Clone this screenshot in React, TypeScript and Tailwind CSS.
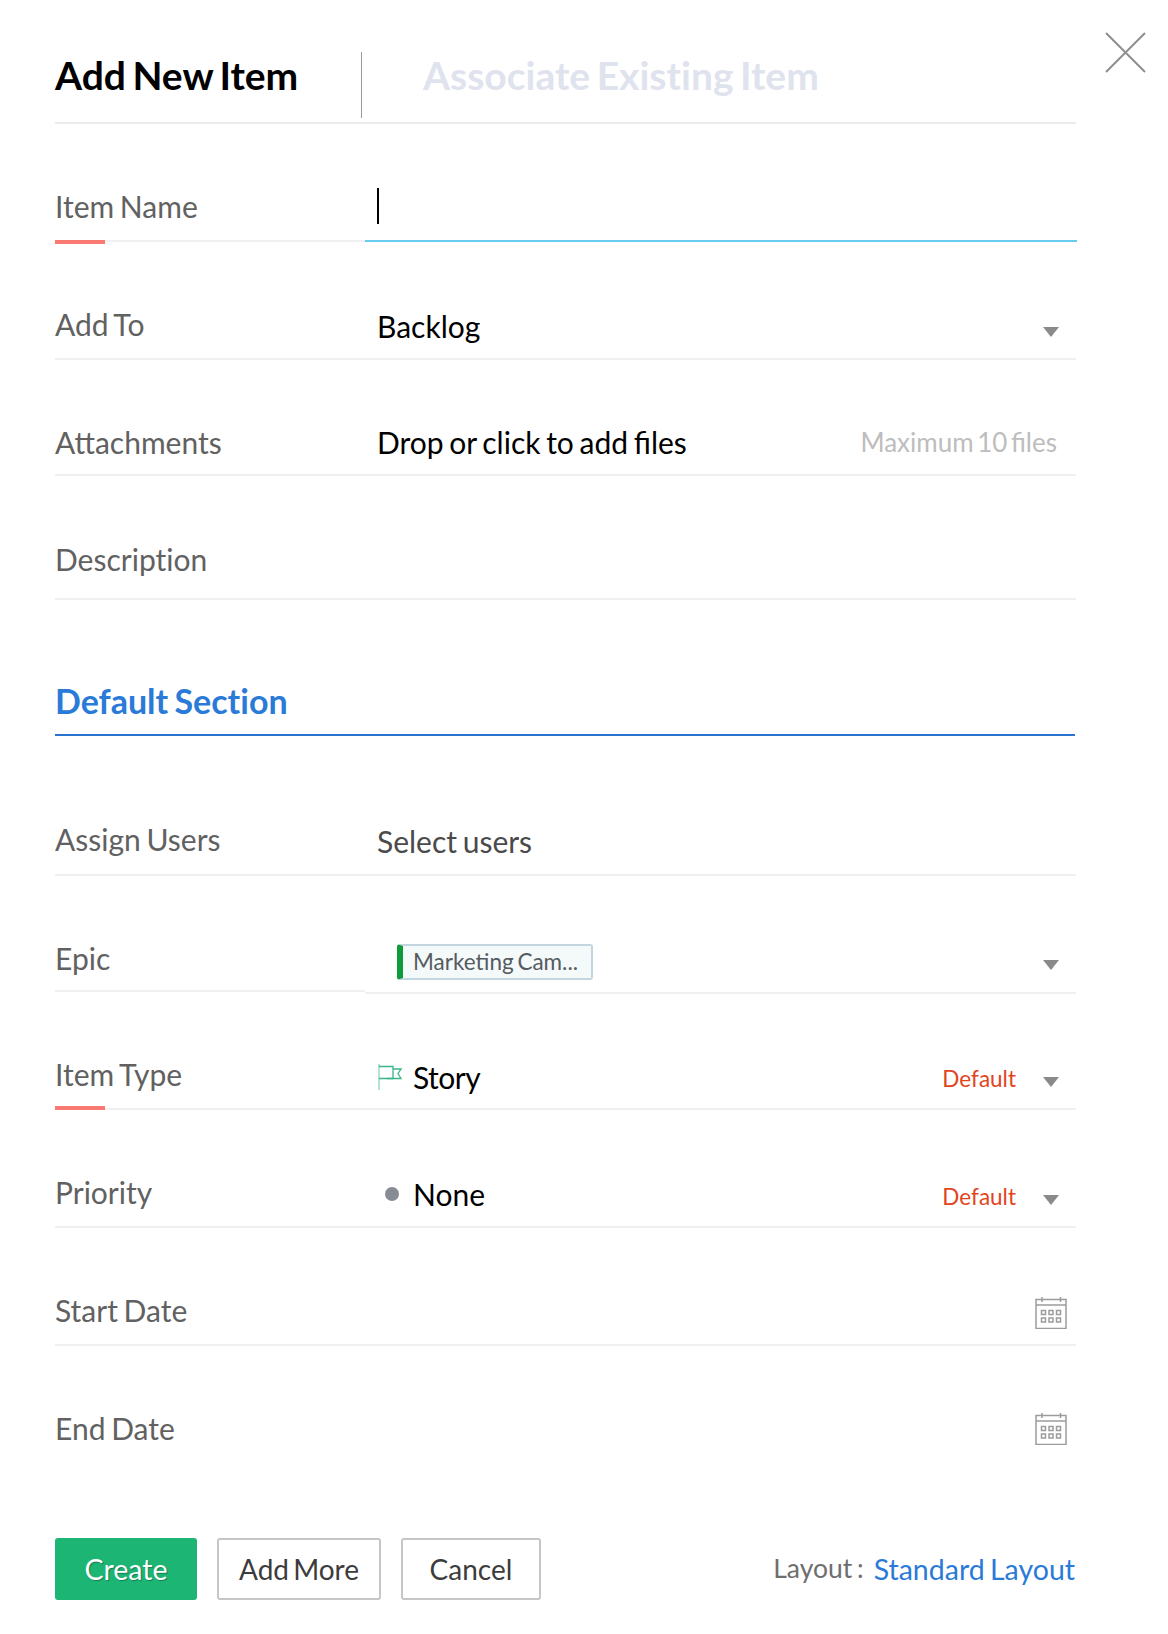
import React from 'react';

function Caret({ className = 'mt-[10px]' }: { className?: string }) {
  return <span className={`ml-[27px] mr-[17px] h-0 w-0 border-x-[8px] border-t-[10px] border-x-transparent border-t-[#8a8a8a] ${className}`} />;
}

function CalendarIcon() {
  return (
    <svg width="32" height="32" viewBox="0 0 32 32" fill="none" stroke="#9c9c9c" strokeWidth="1.500" className="mr-[9px]">
      <path d="M1 2.500h30v29H1z" />
      <path d="M1 8h30M7 0v5M25.500 0v5" />
      <path d="M6.500 13.500h4v4h-4zM14 13.500h4v4h-4zM21.500 13.500h4v4h-4zM6.500 21h4v4h-4zM14 21h4v4h-4zM21.500 21h4v4h-4z" />
    </svg>
  );
}

function FlagIcon() {
  return (
    <svg width="24" height="26" viewBox="0 0 24 26" fill="none" stroke="#39b58a" strokeWidth="1.300" className="ml-[1px] mr-[11px]">
      <path d="M1 0v26" strokeOpacity="0.6" />
      <path d="M1 2.500h14v12H1" />
      <path d="M15 5h8l-3 4.500 3 5H9" />
    </svg>
  );
}

interface RowProps {
  label: string;
  required?: boolean;
  children?: React.ReactNode;
  noBorder?: boolean;
  heightClass: string;
  labelPad: string;
  valuePad?: string;
  labelClass?: string;
}

function Row({ label, required, children, noBorder, heightClass, labelPad, valuePad = 'pb-[14px]', labelClass = '' }: RowProps) {
  return (
    <div className={`relative flex items-end ${heightClass} ${noBorder ? '' : 'border-b-2 border-[#f0f0f0]'}`}>
      <div className={`w-[310px] shrink-0 text-[30px] leading-[40px] text-[#616161] ${labelPad} ${labelClass}`}>{label}</div>
      <div className={`flex flex-1 items-center pl-[12px] text-[30px] leading-[40px] text-black ${valuePad}`}>{children}</div>
      {required && <span className="absolute bottom-[-2px] left-0 h-[4px] w-[50px] bg-[#f97a72]" />}
    </div>
  );
}

export default function App() {
  return (
    <div className="relative h-[1634px] w-[1168px] bg-white pl-[55px] pr-[92px] font-['Lato',sans-serif] [word-spacing:-2px]">
      <button className="absolute right-[22px] top-[32px]">
        <svg width="41" height="41" viewBox="0 0 41 41" stroke="#8f8f8f" strokeWidth="2"><path d="M1 1l39 39M40 1L1 40" /></svg>
      </button>

      <div className="flex h-[124px] items-start border-b-2 border-[#ebebeb]">
        <div className="w-[306px] pt-[50px] text-[39px] font-bold leading-[50px] text-black [word-spacing:-3px]">Add New Item</div>
        <div className="mt-[52px] h-[66px] w-px bg-[#9a9a9a]" />
        <div className="pl-[61px] pt-[50px] text-[39px] font-bold leading-[50px] text-[#dfe3ee] [font-variant-ligatures:none] [word-spacing:-3px]">Associate Existing Item</div>
      </div>

      <div className="relative flex h-[118px] items-end">
        <div className="w-[310px] shrink-0 border-b-2 border-[#f0f0f0] pb-[14px] text-[30px] leading-[40px] text-[#616161]">Item Name</div>
        <div className="-mr-px flex h-[68px] flex-1 border-b-2 border-[#68cbef] pl-[12px] pt-[14px]">
          <span className="h-[36px] w-[2px] bg-black" />
        </div>
        <span className="absolute bottom-[-2px] left-0 h-[4px] w-[50px] bg-[#f97a72]" />
      </div>

      <Row label="Add To" heightClass="h-[118px]" labelPad="pb-[14px]" valuePad="pb-[12px]">
        <span className="flex-1">Backlog</span>
        <Caret className="mt-[12px]" />
      </Row>
      <Row label="Attachments" heightClass="h-[116px]" labelPad="pb-[12px]" valuePad="pb-[12px]">
        <span className="flex-1">Drop or click to add files</span>
        <span className="mr-[19px] text-[26px] text-[#bdbdbd] [word-spacing:-3px]">Maximum 10 files</span>
      </Row>
      <Row label="Description" heightClass="h-[124px]" labelPad="pb-[19px]" labelClass="[font-variant-ligatures:none]" />

      <div className="mr-px flex h-[136px] items-end border-b-2 border-[#2a74d0] pb-[10px] text-[34px] font-bold leading-[46px] text-[#2a7ad8] [font-variant-ligatures:none]">Default Section</div>

      <Row label="Assign Users" heightClass="h-[140px]" labelPad="pb-[15px]" valuePad="pb-[13px]">
        <span className="text-[#4a4a4a]">Select users</span>
      </Row>

      <div className="relative flex h-[118px] items-end">
        <div className="mb-[2px] w-[310px] shrink-0 border-b-2 border-[#f0f0f0] pb-[12px] text-[30px] leading-[40px] text-[#616161]">Epic</div>
        <div className="flex flex-1 items-center border-b-2 border-[#f0f0f0] pb-[12px] pl-[32px]">
          <span className="flex h-[36px] w-[196px] items-center whitespace-nowrap rounded-[3px] border-2 border-l-[6px] border-[#c3d6e0] border-l-[#0f9a3c] bg-[#f4f9fa] pl-[10px] text-[22.5px] text-[#555b60]">Marketing Cam...</span>
          <span className="flex-1" />
          <Caret className="mt-[6px]" />
        </div>
      </div>

      <Row label="Item Type" required heightClass="h-[116px]" labelPad="pb-[14px]" valuePad="pb-[9px]">
        <FlagIcon />
        <span className="flex-1 tracking-[-0.5px]">Story</span>
        <span className="mt-[4px] text-[22.5px] text-[#e2451d]">Default</span>
        <Caret />
      </Row>
      <Row label="Priority" heightClass="h-[118px]" labelPad="pb-[14px]" valuePad="pb-[9px]">
        <span className="ml-[8px] mr-[14px] h-[14px] w-[14px] rounded-full bg-[#878c94]" />
        <span className="flex-1">None</span>
        <span className="mt-[6px] text-[22.5px] text-[#e2451d]">Default</span>
        <Caret className="mt-[12px]" />
      </Row>
      <Row label="Start Date" heightClass="h-[118px]" labelPad="pb-[14px]" valuePad="pb-[15px]">
        <span className="flex-1" />
        <CalendarIcon />
      </Row>
      <Row label="End Date" noBorder heightClass="h-[116px]" labelPad="pb-[14px]" valuePad="pb-[17px]">
        <span className="flex-1" />
        <CalendarIcon />
      </Row>

      <div className="mt-[76px] flex items-center">
        <button className="h-[62px] w-[142px] rounded-[3px] bg-[#1cb574] text-[28.5px] text-white [text-shadow:1px_1px_1px_rgba(0,0,0,0.3)]">Create</button>
        <button className="ml-[20px] h-[62px] w-[164px] rounded-[3px] border-2 border-[#c6c6c6] text-[28px] text-[#3c3c3c] [word-spacing:-3px]">Add More</button>
        <button className="ml-[20px] h-[62px] w-[140px] rounded-[3px] border-2 border-[#c6c6c6] text-[28px] text-[#3c3c3c]">Cancel</button>
        <span className="ml-auto text-[26.5px] text-[#6e6e6e]">Layout :</span>
        <span className="ml-[10px] mr-px text-[28.5px] text-[#2a7ad8]">Standard Layout</span>
      </div>
    </div>
  );
}
